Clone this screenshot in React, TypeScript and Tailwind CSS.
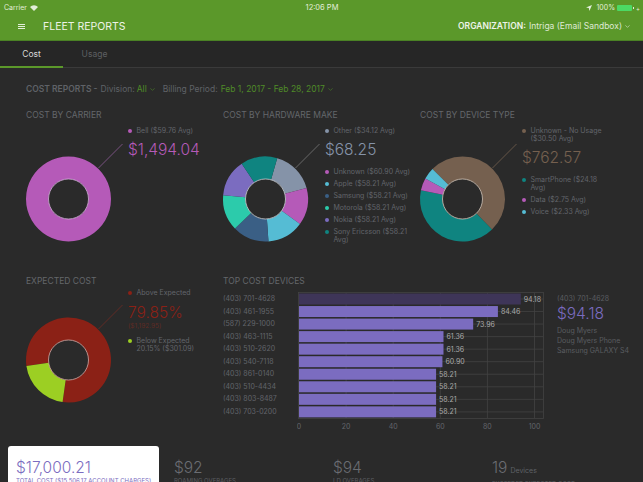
import type { ReactNode } from 'react';
import { ChevronDown } from 'lucide-react';

type Slice = { from: number; to: number; color: string };

const bars = [
  { phone: '(403) 701-4628', value: 94.18, label: '94.18' },
  { phone: '(403) 461-1955', value: 84.46, label: '84.46' },
  { phone: '(587) 229-1000', value: 73.96, label: '73.96' },
  { phone: '(403) 463-1115', value: 61.36, label: '61.36' },
  { phone: '(403) 510-2620', value: 61.36, label: '61.36' },
  { phone: '(403) 540-7118', value: 60.9, label: '60.90' },
  { phone: '(403) 861-0140', value: 58.21, label: '58.21' },
  { phone: '(403) 510-4434', value: 58.21, label: '58.21' },
  { phone: '(403) 803-8487', value: 58.21, label: '58.21' },
  { phone: '(403) 703-0200', value: 58.21, label: '58.21' },
];

function point(cx: number, cy: number, r: number, deg: number) {
  const a = ((deg - 90) * Math.PI) / 180;
  return `${cx + r * Math.cos(a)} ${cy + r * Math.sin(a)}`;
}

function slicePath(cx: number, cy: number, s: Slice) {
  const big = s.to - s.from > 180 ? 1 : 0;
  return `M${point(cx, cy, 42.5, s.from)} A42.5 42.5 0 ${big} 1 ${point(cx, cy, 42.5, s.to)} L${point(cx, cy, 20, s.to)} A20 20 0 ${big} 0 ${point(cx, cy, 20, s.from)} Z`;
}

function Donut({ slices, lead, ring }: { slices: Slice[]; lead: string; ring: string }) {
  return (
    <svg width="102" height="120" viewBox="0 0 102 120" className="shrink-0 overflow-visible">
      <line x1="72.5" y1="43" x2="96.5" y2="19" stroke={lead} strokeWidth="0.8" />
      {slices.map((s) => (
        <path key={s.from} d={slicePath(42.5, 74, s)} fill={s.color} />
      ))}
      <circle cx="42.5" cy="74" r="20" fill="#2a2a2a" stroke={ring} strokeWidth="0.8" />
    </svg>
  );
}

function Dot({ color, children, wide }: { color: string; children: ReactNode; wide?: boolean }) {
  return (
    <div className={`flex gap-[4.5px] text-[7px] leading-[8px] text-[#62656a] ${wide ? 'w-[88px]' : ''}`}>
      <span className="mt-[2px] h-[4px] w-[4px] shrink-0 rounded-full" style={{ backgroundColor: color }} />
      <span>{children}</span>
    </div>
  );
}

function Title({ children }: { children: string }) {
  return <h3 className="text-[8.5px] leading-[11px] text-[#64676b]">{children}</h3>;
}

function BarPlot() {
  const x = (v: number) => 2 + v * 2.355;
  return (
    <svg width="250" height="142" viewBox="0 0 250 142" className="shrink-0">
      {[20, 40, 60, 80, 100].map((v) => (
        <line key={v} x1={x(v)} y1="1" x2={x(v)} y2="126" stroke="#434343" strokeWidth="0.8" />
      ))}
      <rect x="1.5" y="0.5" width="245" height="126" fill="none" stroke="#434343" strokeWidth="0.8" />
      {bars.map((b, i) => {
        const cy = 7 + i * 12.54;
        return (
          <g key={b.phone}>
            <line x1="1.5" y1={cy} x2="246" y2={cy} stroke="#434343" strokeWidth="0.8" />
            <rect x="2" y={cy - 5.5} width={x(b.value) - 2} height="11" fill={i === 0 ? '#3e3558' : '#7b6cc0'} />
            <text x={x(b.value) + 3} y={cy + 2.6} fontSize="7" fill="#a9a9a9">
              {b.label}
            </text>
          </g>
        );
      })}
      {[0, 20, 40, 60, 80, 100].map((v) => (
        <text key={v} x={x(v)} y="136.5" fontSize="7" fill="#62656a" textAnchor="middle">
          {v}
        </text>
      ))}
    </svg>
  );
}

function Stat({ value, unit, caption }: { value: string; unit?: string; caption: string }) {
  return (
    <div className="w-[159px] shrink-0 pt-[12px]">
      <div className="text-[15.5px] font-light leading-[19px] text-[#6a6d72]">
        {value}
        {unit && <span className="ml-[3px] text-[7px] font-normal text-[#5f6267]">{unit}</span>}
      </div>
      <div className="whitespace-nowrap text-[6px] leading-[7px] text-[#5a5d61]">{caption}</div>
    </div>
  );
}

export default function App() {
  return (
    <div className="flex h-[482px] w-[643px] flex-col overflow-hidden bg-[#2a2a2a] font-['Inter',sans-serif]">
      {/* Status + header */}
      <header className="h-[41px] shrink-0 border-b border-[#4a8124] bg-[#5b982a] text-white">
        <div className="flex h-[14px] items-center justify-between pl-[4px] pr-[3px] pt-[2px] text-[7px] text-[#e3eeda]">
          <div className="flex w-[100px] items-center gap-[3px]">
            Carrier
            <svg width="8" height="6" viewBox="0 0 8 6">
              <path d="M4 6 L0 2 A5.7 5.7 0 0 1 8 2 Z" fill="#e3eeda" />
            </svg>
          </div>
          <span className="text-[7.5px]">12:06 PM</span>
          <div className="flex w-[100px] items-center justify-end gap-[2px]">
            <svg width="6" height="6" viewBox="0 0 6 6">
              <path d="M6 0 L0 2.6 L2.8 3.1 L3.4 6 Z" fill="#e3eeda" />
            </svg>
            <span className="ml-[2px]">100%</span>
            <span className="flex items-center">
              <span className="h-[6px] w-[15px] rounded-[1px] bg-[#4cd964]" />
              <span className="ml-[1px] h-[2px] w-[1px] bg-[#e3eeda]" />
            </span>
            <span className="text-[6px]">+</span>
          </div>
        </div>
        <div className="flex h-[26px] items-center justify-between pb-[1px] pl-[18px] pr-[12px]">
          <div className="flex items-center">
            <div className="flex w-[7px] flex-col gap-[1px]">
              <span className="h-[1px] w-[7px] bg-[#e3eeda]" />
              <span className="h-[1px] w-[7px] bg-[#e3eeda]" />
              <span className="h-[1px] w-[7px] bg-[#e3eeda]" />
            </div>
            <h1 className="ml-[18px] text-[10.5px] font-normal text-[#eef4e8]">FLEET REPORTS</h1>
          </div>
          <div className="flex items-center text-[8.5px] text-[#dfe9d5]">
            <span className="font-semibold text-[#eef4e8]">ORGANIZATION:</span>
            <span className="ml-[3px]">Intriga (Email Sandbox)</span>
            <ChevronDown className="ml-[2px] h-[7px] w-[7px]" />
          </div>
        </div>
      </header>

      {/* Tabs */}
      <nav className="flex h-[27px] shrink-0 border-b border-[#3a3a3a] bg-[#262626] pt-[1px] text-[8.5px]">
        <div className="-mb-px flex w-[63px] items-center justify-center border-b-2 border-[#5b982a] text-[#d8d8d8]">Cost</div>
        <div className="flex w-[63px] items-center justify-center text-[#5d5f62]">Usage</div>
      </nav>

      {/* Filters */}
      <div className="flex items-center pl-[26px] pt-[15px] text-[8.5px] leading-[12px] text-[#5f6267]">
        <span className="font-semibold">COST REPORTS -</span>
        <span className="ml-[3px]">Division:</span>
        <span className="ml-[2px] text-[#4f8a28]">All</span>
        <ChevronDown className="ml-[2px] h-[7px] w-[7px] text-[#4f8a28]" />
        <span className="ml-[7px]">Billing Period:</span>
        <span className="ml-[3px] text-[#4f8a28]">Feb 1, 2017 - Feb 28, 2017</span>
        <ChevronDown className="ml-[2px] h-[7px] w-[7px] text-[#4f8a28]" />
      </div>

      {/* Donuts, row 1 */}
      <section className="mt-[15px] grid h-[166px] shrink-0 grid-cols-[197px_197px_1fr] pl-[26px]">
        <div>
          <Title>COST BY CARRIER</Title>
          <div className="mt-[4px] flex">
            <Donut lead="#8b5a95" ring="#d8b4de" slices={[{ from: 0, to: 359.99, color: '#b55ab8' }]} />
            <div className="pt-[2px]">
              <Dot color="#b55ab8">Bell ($59.76 Avg)</Dot>
              <div className="mt-[3px] text-[15.5px] font-light leading-[23px] text-[#b55ab8]">$1,494.04</div>
            </div>
          </div>
        </div>
        <div>
          <Title>COST BY HARDWARE MAKE</Title>
          <div className="mt-[4px] flex">
            <Donut
              lead="#777"
              ring="#cfd3d8"
              slices={[
                { from: 16, to: 75, color: '#8593a8' },
                { from: 75, to: 126, color: '#b55ab8' },
                { from: 126, to: 176, color: '#55bcd4' },
                { from: 176, to: 226, color: '#3a5f85' },
                { from: 226, to: 275, color: '#2ccbab' },
                { from: 275, to: 326, color: '#7b6cc0' },
                { from: 326, to: 376, color: '#0f8480' },
              ]}
            />
            <div className="flex flex-col pt-[2px]">
              <Dot color="#8593a8">Other ($34.12 Avg)</Dot>
              <div className="mb-[7px] mt-[3px] text-[15.5px] font-light leading-[23px] text-[#8593a8]">$68.25</div>
              <div className="flex flex-col gap-[4px]">
                <Dot color="#b55ab8">Unknown ($60.90 Avg)</Dot>
                <Dot color="#55bcd4">Apple ($58.21 Avg)</Dot>
                <Dot color="#3a5f85">Samsung ($58.21 Avg)</Dot>
                <Dot color="#2ccbab">Motorola ($58.21 Avg)</Dot>
                <Dot color="#7b6cc0">Nokia ($58.21 Avg)</Dot>
                <Dot wide color="#0f8480">Sony Ericsson ($58.21 Avg)</Dot>
              </div>
            </div>
          </div>
        </div>
        <div>
          <Title>COST BY DEVICE TYPE</Title>
          <div className="mt-[4px] flex">
            <Donut
              lead="#75604f"
              ring="#d6c8bb"
              slices={[
                { from: -45, to: 136, color: '#75604f' },
                { from: 136, to: 282, color: '#0f8480' },
                { from: 282, to: 299, color: '#b55ab8' },
                { from: 299, to: 315, color: '#55bcd4' },
              ]}
            />
            <div className="flex flex-col pt-[2px]">
              <Dot wide color="#75604f">Unknown - No Usage ($30.50 Avg)</Dot>
              <div className="mb-[7px] mt-[3px] text-[15.5px] font-light leading-[23px] text-[#75604f]">$762.57</div>
              <div className="flex flex-col gap-[4px]">
                <Dot wide color="#0f8480">SmartPhone ($24.18 Avg)</Dot>
                <Dot color="#b55ab8">Data ($2.75 Avg)</Dot>
                <Dot color="#55bcd4">Voice ($2.33 Avg)</Dot>
              </div>
            </div>
          </div>
        </div>
      </section>

      {/* Expected cost + bars */}
      <section className="flex h-[167px] shrink-0 pl-[26px]">
        <div className="w-[197px]">
          <Title>EXPECTED COST</Title>
          <div className="-mt-[1px] flex">
            <Donut
              lead="#6e2b24"
              ring="#d9aaa5"
              slices={[
                { from: 262, to: 548, color: '#8b2116' },
                { from: 188, to: 262, color: '#9ccf23' },
              ]}
            />
            <div className="mt-[3px] flex flex-col">
              <Dot color="#8b2116">Above Expected</Dot>
              <div className="mt-[7px] text-[15.5px] font-light leading-[18px] text-[#8b2116]">79.85%</div>
              <div className="text-[6.5px] leading-[8px] text-[#5f2a24]">($1,192.95)</div>
              <div className="mt-[7px]">
                <Dot color="#9ccf23">
                  Below Expected
                  <br />
                  20.15% ($301.09)
                </Dot>
              </div>
            </div>
          </div>
        </div>
        <div className="flex flex-col">
          <Title>TOP COST DEVICES</Title>
          <div className="mt-[5px] flex">
            <div className="w-[74px] pt-[1px]">
              {bars.map((b) => (
                <div key={b.phone} className="h-[12.54px] text-[7px] leading-[12.54px] text-[#62656a]">
                  {b.phone}
                </div>
              ))}
            </div>
            <BarPlot />
            <div className="ml-[10px] whitespace-nowrap pt-[2px] text-[#5a5d61]">
              <div className="text-[7px] leading-[10px]">(403) 701-4628</div>
              <div className="-mt-[1px] text-[15.5px] font-light leading-[22px] text-[#7b6cc0]">$94.18</div>
              <div className="mt-[1px] text-[7px] leading-[10px]">
                Doug Myers
                <br />
                Doug Myers Phone
                <br />
                Samsung GALAXY S4
              </div>
            </div>
          </div>
        </div>
      </section>

      {/* Totals strip */}
      <footer className="flex flex-1 pl-[8px] pt-[3px]">
        <div className="mr-[15px] w-[151px] shrink-0 rounded-t-[3px] bg-white pl-[8px] pt-[12px]">
          <div className="text-[15.5px] font-light leading-[19px] text-[#7b6cc0]">$17,000.21</div>
          <div className="whitespace-nowrap text-[6px] leading-[7px] text-[#7b6cc0]">
            TOTAL COST ($15,506.17 ACCOUNT CHARGES)
          </div>
        </div>
        <Stat value="$92" caption="ROAMING OVERAGES" />
        <Stat value="$94" caption="LD OVERAGES" />
        <Stat value="19" unit="Devices" caption="EXCEEDED EXPECTED COST" />
      </footer>
    </div>
  );
}
